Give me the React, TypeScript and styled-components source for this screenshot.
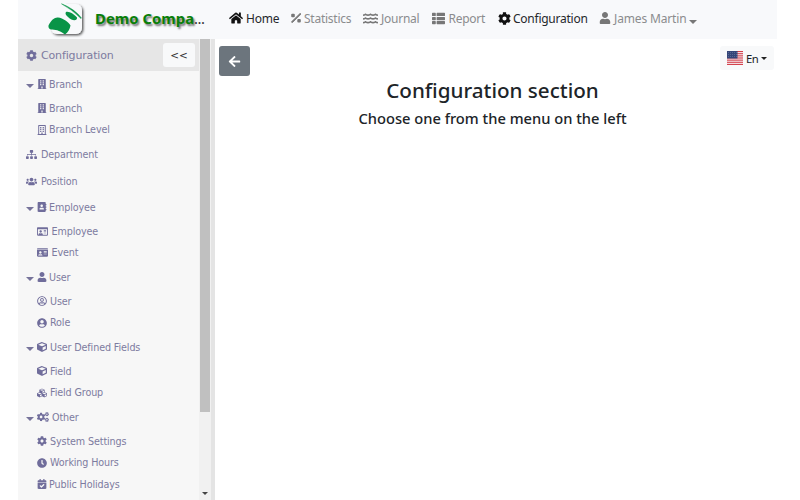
import React from "react";
import styled, { createGlobalStyle } from "styled-components";
import type { IconType } from "react-icons";
import {
  FaAddressBook, FaArrowLeft, FaBuilding, FaCalendarCheck, FaClock, FaCog, FaCogs, FaCube, FaCubes,
  FaHome, FaIdCard, FaRegBuilding, FaRegIdCard, FaRegUserCircle, FaSitemap, FaThList, FaUser,
  FaUserCircle, FaUsers, FaWater,
} from "react-icons/fa";

const GlobalStyle = createGlobalStyle`
  * { box-sizing: border-box; }
  body { margin: 0; background: #fff; overflow: hidden; font-family: "Noto Sans", "Open Sans", sans-serif; }
`;

const Page = styled.div`
  width: 759px;
  height: 500px;
  margin-left: 18px;
  display: flex;
  flex-direction: column;
  overflow: hidden;
`;

const TopBar = styled.header`
  height: 39px;
  flex: none;
  display: flex;
  background: #f8f9fb;
`;

const LogoSlot = styled.div`
  width: 77px;
  padding: 3px 0 0 30px;
  svg { display: block; overflow: visible; }
`;

const Brand = styled.div`
  width: 134px;
  line-height: 36px;
  font-size: 14.8px;
  font-weight: 700;
  letter-spacing: 0.05px;
  color: #087f08;
  text-shadow: 1.5px 2px 2px rgba(0, 0, 0, 0.55);
  white-space: nowrap;
`;

const Ellipsis = styled.span`
  color: #333;
  font-weight: 400;
  letter-spacing: -0.5px;
  text-shadow: none;
`;

const Nav = styled.nav`
  display: flex;
`;

const NavItem = styled.a<{ $w: number; $active?: boolean; $ls?: number }>`
  width: ${(p) => p.$w}px;
  height: 36px;
  display: flex;
  align-items: center;
  white-space: nowrap;
  font-size: 12px;
  letter-spacing: ${(p) => p.$ls ?? -0.25}px;
  color: ${(p) => (p.$active ? "#26282b" : "#8b8c8e")};
  svg { flex: none; color: ${(p) => (p.$active ? "#111" : "#777")}; }
`;

const IconSlot = styled.span<{ $w: number }>`
  width: ${(p) => p.$w}px;
  flex: none;
  display: flex;
`;

const Caret = styled.i<{ $size?: number; $color?: string }>`
  flex: none;
  border: ${(p) => p.$size ?? 4}px solid transparent;
  border-top-color: ${(p) => p.$color ?? "#77749b"};
  border-bottom: 0;
`;

const NavCaret = styled(Caret)`
  margin: 7px 0 0 3px;
`;

const Body = styled.div`
  flex: 1;
  min-height: 0;
  display: flex;
`;

const Sidebar = styled.aside`
  width: 181px;
  background: #f7f7f7;
  font-family: "DejaVu Sans", sans-serif;
  color: #7d7ba0;
`;

const SideHeader = styled.div`
  height: 32px;
  padding: 0 4px 0 8px;
  display: flex;
  align-items: center;
  background: #e6e6e6;
  font-size: 11px;
  letter-spacing: -0.15px;
  svg { color: #706d9b; }
`;

const Collapse = styled.button`
  width: 32px;
  height: 24px;
  margin-left: auto;
  padding: 0;
  border: 0;
  border-radius: 3px;
  background: #f8f9fa;
  color: #333;
  font: 10.5px "DejaVu Sans", sans-serif;
`;

const Row = styled.div<{ $h: number; $indent: number; $ls?: number }>`
  height: ${(p) => p.$h}px;
  padding-left: ${(p) => p.$indent}px;
  padding-top: ${(p) => (p.$h === 27 ? 1 : 0)}px;
  display: flex;
  align-items: center;
  white-space: nowrap;
  font-size: 9.6px;
  letter-spacing: ${(p) => p.$ls ?? -0.12}px;
  svg { color: #706d9b; }
`;

const RowCaret = styled(Caret)`
  margin: 3px 3px 0 0;
`;

const ScrollTrack = styled.div`
  width: 12px;
  display: flex;
  flex-direction: column;
  justify-content: space-between;
  align-items: center;
  padding-bottom: 5px;
  background: #f1f1f1;
`;

const ScrollThumb = styled.div`
  width: 10px;
  height: 373px;
  background: #c0c0c0;
`;

const Divider = styled.div`
  width: 4px;
  background: #e4e4e4;
`;

const Main = styled.main`
  flex: 1;
  display: flex;
  flex-direction: column;
  color: #202428;
`;

const Tools = styled.div`
  height: 38px;
  padding: 7px 3px 0 4px;
  display: flex;
  justify-content: space-between;
`;

const BackButton = styled.button`
  width: 31px;
  height: 30px;
  padding: 0;
  border: 0;
  border-radius: 3px;
  background: #6c757d;
  color: #fff;
  display: flex;
  align-items: center;
  justify-content: center;
`;

const Language = styled.div`
  width: 54px;
  height: 24px;
  padding-left: 7px;
  display: flex;
  align-items: center;
  gap: 3px;
  border-radius: 3px;
  background: #f8f9fa;
  font-size: 11.3px;
  letter-spacing: -0.6px;
`;

const Title = styled.h1`
  margin: 0;
  padding-right: 7px;
  height: 27px;
  line-height: 26px;
  text-align: center;
  font-size: 20.6px;
  font-weight: 500;
`;

const Subtitle = styled.h2`
  margin: 0;
  padding-right: 7px;
  height: 28px;
  line-height: 28px;
  text-align: center;
  font-size: 14.7px;
  font-weight: 500;
`;

const Logo = () => (
  <svg width="36" height="32" viewBox="0 0 36 32">
    <defs>
      <filter id="cardShadow" x="-20%" y="-20%" width="150%" height="150%">
        <feDropShadow dx="1.4" dy="1.4" stdDeviation="1" floodOpacity="0.65" />
      </filter>
    </defs>
    <rect x="3" y="1" width="31" height="30" rx="6" fill="#f8f9fb" filter="url(#cardShadow)" />
    <path d="M-2-2H20L0 26H-2Z" fill="#f8f9fb" />
    <path d="M13.500.8Q26 5.500 33.500 15L33 15.500Q24 6.500 13.500.8Z" fill="#099447" stroke="#099447" strokeWidth=".5" />
    <path d="M18 9C20 7.500 26.500 11 29 14.500C29.500 18 24.500 18.500 20 14C17.500 12 17 10 18 9Z" fill="#099447" />
    <path d="M.5 22.500C3 17 7 14 10 14.500C15 15 21 19.500 22.500 22.500C22 26 20 29.500 17 31.500C11 27 7 26.500 3 26.500Q0 25.500.5 22.500Z" fill="#099447" />
  </svg>
);

const PercentIcon = () => (
  <svg width="10" height="10" viewBox="0 0 10 10" fill="currentColor">
    <path d="M9.200.3 10 1.100 1.300 9.700.4 8.900Z" stroke="currentColor" strokeWidth=".8" />
    <rect x=".2" y=".7" width="3.600" height="3.600" rx="1" />
    <rect x="6.300" y="6" width="3.500" height="3.500" rx="1" />
  </svg>
);

const Flag = () => (
  <svg width="16" height="14" viewBox="0 0 16 14">
    <rect width="16" height="14" fill="#f6eef0" />
    {[0, 1, 2, 3, 4, 5, 6].map((n) => (
      <rect key={n} y={n * 2.150} width="16" height="1.080" fill="#d33f4b" />
    ))}
    <rect width="10.500" height="7.500" fill="#344679" />
    {[1, 3, 5].map((y) =>
      [1, 3, 5, 7, 9].map((x) => <rect key={`${x}-${y}`} x={x} y={y + 0.3} width=".7" height=".7" fill="#7e8bad" />)
    )}
  </svg>
);

type Entry = { label: string; icon: IconType; h: number; size: number; slot: number; indent: number; group?: boolean; ls?: number };

const entries: Entry[] = [
  { label: "Branch", icon: FaBuilding, h: 26, size: 10, slot: 12, indent: 8, group: true },
  { label: "Branch", icon: FaBuilding, h: 22, size: 10, slot: 12, indent: 19 },
  { label: "Branch Level", icon: FaRegBuilding, h: 21, size: 10, slot: 12, indent: 19 },
  { label: "Department", icon: FaSitemap, h: 27, size: 11, slot: 15, indent: 8 },
  { label: "Position", icon: FaUsers, h: 27, size: 11, slot: 15, indent: 8 },
  { label: "Employee", icon: FaAddressBook, h: 26, size: 10, slot: 12, indent: 8, group: true },
  { label: "Employee", icon: FaRegIdCard, h: 22, size: 11, slot: 14.5, indent: 19 },
  { label: "Event", icon: FaIdCard, h: 21, size: 11, slot: 14.5, indent: 19 },
  { label: "User", icon: FaUser, h: 27, size: 10, slot: 12, indent: 8, group: true },
  { label: "User", icon: FaRegUserCircle, h: 22, size: 10, slot: 13, indent: 19 },
  { label: "Role", icon: FaUserCircle, h: 21, size: 10, slot: 13, indent: 19 },
  { label: "User Defined Fields", icon: FaCube, h: 27, size: 10, slot: 13, indent: 8, group: true },
  { label: "Field", icon: FaCube, h: 22, size: 10, slot: 13, indent: 19 },
  { label: "Field Group", icon: FaCubes, h: 21, size: 10, slot: 13, indent: 19 },
  { label: "Other", icon: FaCogs, h: 27, size: 12, slot: 15, indent: 8, group: true },
  { label: "System Settings", icon: FaCog, h: 22, size: 10, slot: 13, indent: 19 },
  { label: "Working Hours", icon: FaClock, h: 21, size: 10, slot: 13, indent: 19 },
  { label: "Public Holidays", icon: FaCalendarCheck, h: 22, size: 10, slot: 12, indent: 19 },
];

export default function App() {
  return (
    <>
      <GlobalStyle />
      <Page>
        <TopBar>
          <LogoSlot><Logo /></LogoSlot>
          <Brand>Demo Compa<Ellipsis>...</Ellipsis></Brand>
          <Nav>
            <NavItem $w={62} $active $ls={-0.2}><IconSlot $w={17}><FaHome size={14} /></IconSlot>Home</NavItem>
            <NavItem $w={72}><IconSlot $w={13}><PercentIcon /></IconSlot>Statistics</NavItem>
            <NavItem $w={69}><IconSlot $w={18}><FaWater size={15} /></IconSlot>Journal</NavItem>
            <NavItem $w={65.5}><IconSlot $w={16.5}><FaThList size={13} /></IconSlot>Report</NavItem>
            <NavItem $w={101.5} $active><IconSlot $w={15.5}><FaCog size={13} /></IconSlot>Configuration</NavItem>
            <NavItem $w={100} $ls={-0.15}>
              <IconSlot $w={15}><FaUser size={12} /></IconSlot>James Martin<NavCaret $color="#777" />
            </NavItem>
          </Nav>
        </TopBar>
        <Body>
          <Sidebar>
            <SideHeader>
              <IconSlot $w={15}><FaCog size={11} /></IconSlot>Configuration
              <Collapse>&lt;&lt;</Collapse>
            </SideHeader>
            {entries.map((e, i) => (
              <Row key={i} $h={e.h} $indent={e.indent} $ls={e.ls}>
                {e.group && <RowCaret />}
                <IconSlot $w={e.slot}><e.icon size={e.size} /></IconSlot>
                {e.label}
              </Row>
            ))}
          </Sidebar>
          <ScrollTrack>
            <ScrollThumb />
            <Caret $size={3} $color="#444" />
          </ScrollTrack>
          <Divider />
          <Main>
            <Tools>
              <BackButton><FaArrowLeft size={13} /></BackButton>
              <Language><Flag />En<Caret $size={3.5} $color="#222" /></Language>
            </Tools>
            <Title>Configuration section</Title>
            <Subtitle>Choose one from the menu on the left</Subtitle>
          </Main>
        </Body>
      </Page>
    </>
  );
}
